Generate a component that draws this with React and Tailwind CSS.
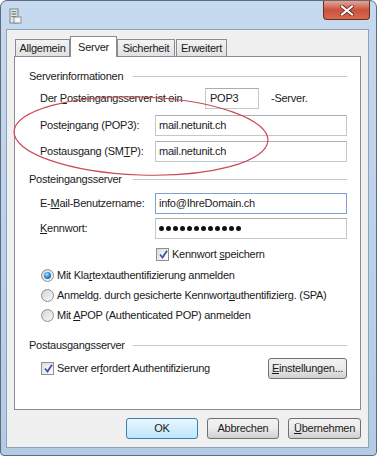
function Header({ children, className = '' }) {
    return (
        <div className={`flex items-center h-[16px] pl-[14px] pr-[13px] ${className}`}>
            <span className="w-[104px]">{children}</span>
            <div className="flex-1 h-px bg-[#c3c9cf]"></div>
        </div>
    )
}

function Field({ label, value, focus, className = '' }) {
    return (
        <div className={`flex items-center h-[21px] pl-[25px] ${className}`}>
            <span className="w-[115px]">{label}</span>
            <div className={`w-[192px] h-full flex items-center pl-[3px] bg-white border ${focus ? 'border-[#7da2ce]' : 'border-[#c2c8d0] border-t-[#abadb3]'}`}>
                {value}
            </div>
        </div>
    )
}

function Check() {
    return (
        <div className="w-[13px] h-[13px] border border-[#8e8f8f] bg-gradient-to-br from-[#dcdcdc] to-[#fbfbfb] p-[2px] flex">
            <div className="flex-1 bg-gradient-to-br from-[#e4e9ef] to-[#fdfdfd] flex items-center justify-center">
                <svg width="9" height="9" viewBox="0 0 9 9">
                    <path d="M1 4.5 L3.5 7.5 L8 0.8" fill="none" stroke="#3c56a0" strokeWidth="1.8" />
                </svg>
            </div>
        </div>
    )
}

function Radio({ on }) {
    return (
        <div className="w-[13px] h-[13px] rounded-full border border-[#8e8f8f] bg-gradient-to-br from-[#d3d3d3] to-[#fafafa] flex items-center justify-center">
            {on && <div className="w-[7px] h-[7px] rounded-full bg-[radial-gradient(circle_at_40%_35%,#b9e3ff_0%,#2a8fd8_45%,#15457e_100%)]"></div>}
        </div>
    )
}

function Btn({ children, def, className = '' }) {
    return (
        <div className={`h-[21px] flex items-center justify-center rounded-[3px] border ${def ? 'border-[#3c7fb1] bg-gradient-to-b from-[#eaf6fd] to-[#bee6fd]' : 'border-[#707070] bg-gradient-to-b from-[#f2f2f2] via-[#ebebeb] to-[#cfcfcf]'} ${className}`}>
            {children}
        </div>
    )
}

function Tab({ children, w, active }) {
    return active ? (
        <div className={`${w} h-[21px] -mb-px relative z-10 bg-white border border-b-0 border-[#898c95] flex items-start pt-[2px] justify-center`}>{children}</div>
    ) : (
        <div className={`${w} h-[17px] bg-gradient-to-b from-[#f3f3f3] to-[#e1e1e1] border border-b-0 border-[#898c95] flex items-center justify-center`}>{children}</div>
    )
}

export default function App() {
    return (
        <div className="relative w-[377px] h-[456px] rounded-t-[7px] rounded-b-[4px] border border-[#5d6b7a] bg-gradient-to-b from-[#c5d9ef] via-[#bcd2ea] to-[#b4cbe5] pt-[28px] px-[5px] pb-[6px] font-['Liberation_Sans',Arial,sans-serif] text-[11px] tracking-[-0.25px] text-[#1a1a1a]">
            {/* title icon */}
            <svg className="absolute left-[8px] top-[7px]" width="13" height="17" viewBox="0 0 13 17">
                <rect x="1" y="1" width="8" height="14" fill="#e6e8ea" stroke="#7c8288" />
                <rect x="2.5" y="3" width="5" height="1.2" fill="#5f9c62" />
                <rect x="2.5" y="5.5" width="5" height="1.2" fill="#6f7780" />
                <rect x="2.5" y="8" width="5" height="1.2" fill="#6f7780" />
                <rect x="5" y="9" width="7" height="6" fill="#f4f4f4" stroke="#8a9096" />
            </svg>
            {/* close button */}
            <div className="absolute top-0 right-[6px] w-[47px] h-[19px] rounded-b-[4px] border border-t-0 border-[#6d2b22] bg-gradient-to-b from-[#e4a597] via-[#c9523e] to-[#d96a4e] flex items-center justify-center">
                <svg width="14" height="11" viewBox="0 0 14 11">
                    <path d="M2 1.5 L12 9.5 M12 1.5 L2 9.5" stroke="#5a2018" strokeWidth="3.6" strokeLinecap="square" />
                    <path d="M2 1.5 L12 9.5 M12 1.5 L2 9.5" stroke="#ffffff" strokeWidth="2.2" strokeLinecap="square" />
                </svg>
            </div>

            <div className="w-[363px] h-[419px] border border-[#8ea2b8] bg-[#f0f0f0] px-[7px] flex flex-col">
                <div className="h-[26px] flex items-end">
                    <div className="w-px"></div>
                    <Tab w="w-[55px]">Allgemein</Tab>
                    <Tab w="w-[47px]" active>Server</Tab>
                    <Tab w="w-[58px]">Sicherheit</Tab>
                    <div className="w-px"></div>
                    <Tab w="w-[51px]">Erweitert</Tab>
                </div>

                <div className="h-[354px] bg-white border border-[#898c95] flex flex-col">
                    <Header className="mt-[11px]">Serverinformationen</Header>

                    <div className="mt-[4px] flex items-center h-[21px] pl-[25px]">
                        <span className="w-[165px]">Der <u>P</u>osteingangsserver ist ein</span>
                        <div className="w-[54px] h-full flex items-center pl-[4px] bg-white border border-[#c2c8d0] border-t-[#abadb3]">POP3</div>
                        <span className="ml-[12px]">-Server.</span>
                    </div>

                    <Field className="mt-[6px]" label={<>Poste<u>i</u>ngang (POP3):</>} value="mail.netunit.ch" />
                    <Field className="mt-[5px]" label={<>Postausgang (SM<u>T</u>P):</>} value="mail.netunit.ch" />

                    <Header className="mt-[9px]">Posteingangsserver</Header>

                    <Field className="mt-[6px]" label={<>E-<u>M</u>ail-Benutzername:</>} value="info@IhreDomain.ch" focus />
                    <div className="mt-[4px] flex items-center h-[21px] pl-[25px]">
                        <span className="w-[115px]"><u>K</u>ennwort:</span>
                        <div className="w-[192px] h-full flex items-center gap-[2px] pl-[3px] bg-white border border-[#c2c8d0] border-t-[#abadb3]">
                            {Array.from({ length: 12 }).map((_, i) => (
                                <div key={i} className="w-[5px] h-[5px] rounded-full bg-[#111]"></div>
                            ))}
                        </div>
                    </div>

                    <div className="mt-[7px] h-[16px] flex items-center gap-[3px] pl-[141px]">
                        <Check />
                        <span>Kennwort <u>s</u>peichern</span>
                    </div>

                    <div className="mt-[5px] h-[16px] flex items-center gap-[3px] pl-[26px]">
                        <Radio on />
                        <span>Mit Kla<u>r</u>textauthentifizierung anmelden</span>
                    </div>
                    <div className="mt-[4px] h-[16px] flex items-center gap-[3px] pl-[26px]">
                        <Radio />
                        <span>Anmeldg. durch gesicherte Kennwort<u>a</u>uthentifizierg. (SPA)</span>
                    </div>
                    <div className="mt-[4px] h-[16px] flex items-center gap-[3px] pl-[26px]">
                        <Radio />
                        <span>Mit <u>A</u>POP (Authenticated POP) anmelden</span>
                    </div>

                    <Header className="mt-[14px]">Postausgangsserver</Header>

                    <div className="mt-[5px] h-[21px] flex items-center pl-[26px] pr-[13px]">
                        <Check />
                        <span className="ml-[3px] flex-1">Server er<u>f</u>ordert Authentifizierung</span>
                        <Btn className="w-[79px]"><span><u>E</u>instellungen...</span></Btn>
                    </div>
                </div>

                <div className="mt-[8px] flex justify-end gap-[9px]">
                    <Btn def className="w-[72px]">OK</Btn>
                    <Btn className="w-[72px]">Abbrechen</Btn>
                    <Btn className="w-[73px]"><span><u>Ü</u>bernehmen</span></Btn>
                </div>
            </div>

            {/* red annotation ellipse */}
            <svg className="absolute left-0 top-0 pointer-events-none" width="377" height="456" viewBox="0 0 377 456">
                <ellipse cx="140" cy="135" rx="127" ry="39" transform="rotate(2 140 135)" fill="none" stroke="#cc4a55" strokeWidth="1.2" />
            </svg>
        </div>
    )
}
